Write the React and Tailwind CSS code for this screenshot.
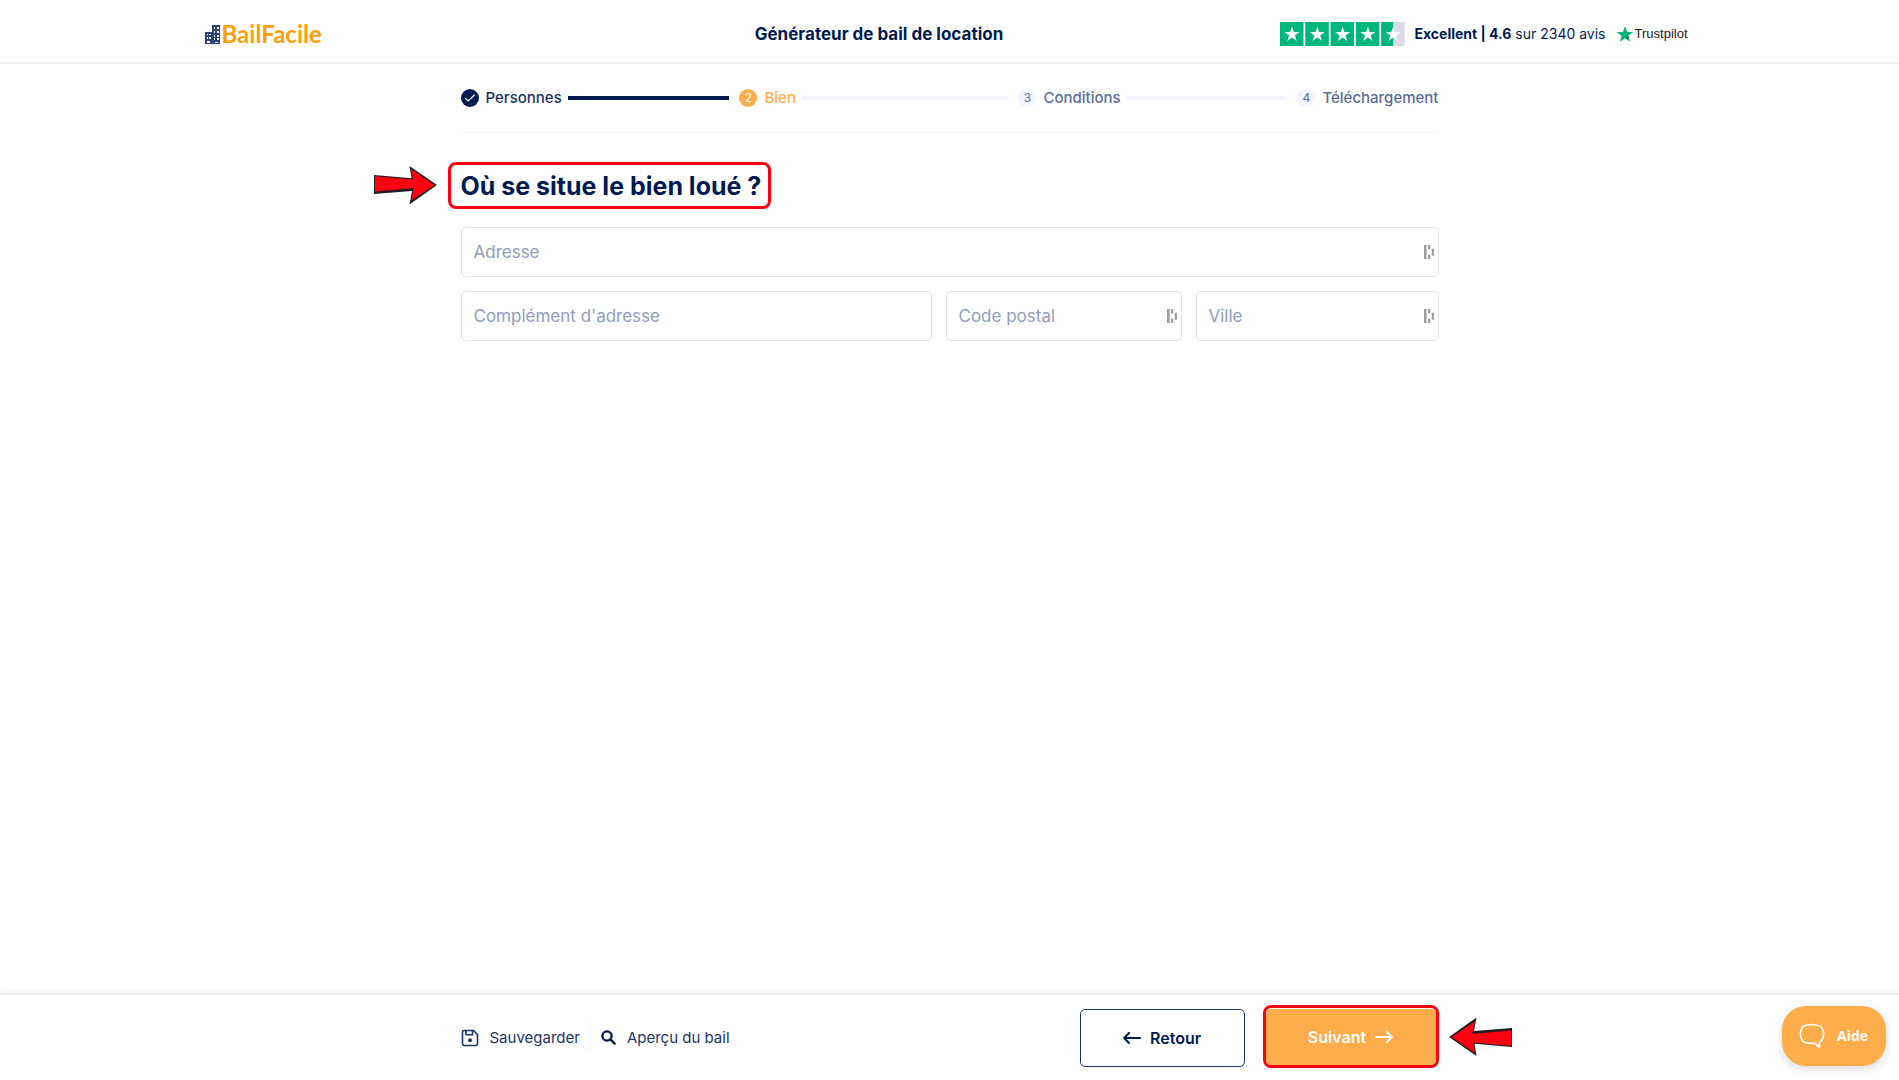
import React from "react";

const STAR = "M12 2.6l2.3 6.6h7l-5.6 4.2 2.1 6.8L12 16.1l-5.8 4.1 2.1-6.8L2.7 9.2h7z";

function Logo() {
  return (
    <a href="#" aria-label="BailFacile" className="flex w-[274px] items-center gap-px">
      <svg width="16" height="21" viewBox="0 0 16 21" shapeRendering="crispEdges" aria-hidden="true">
        <path d="M7 1h8v19H7z M0 8h7v12H0z" fill="#2b4475" />
        <path
          fill="#fff"
          d="M9 3h1v2H9z M12 3h2v2h-2z M9 7h1v2H9z M12 7h2v2h-2z M9 11h1v2H9z M12 11h2v2h-2z M9 14h1v2H9z M12 14h2v2h-2z M10 18h3v1h-3z M2 10h1v1H2z M4 10h2v1H4z M2 13h1v2H2z M4 13h2v2H4z M2 17h3v2H2z"
        />
      </svg>
      <span className="font-[Lato,sans-serif] text-2xl leading-7 font-bold text-[#ff9f0a]">BailFacile</span>
    </a>
  );
}

function Rating() {
  return (
    <div className="flex items-center">
      <svg width="125" height="24" viewBox="0 0 125 24" role="img" aria-label="4.6">
        {[0, 1, 2, 3, 4].map((i) => (
          <g key={i} transform={`translate(${i * 25.3} 0)`}>
            <rect width="23.5" height="24" fill={i === 4 ? "#dcdce6" : "#00b67a"} />
            {i === 4 && <rect width="12" height="24" fill="#00b67a" />}
            <path
              d="M12 4.5l1.8 5.5h5.7l-4.6 3.4 1.8 5.6-4.7-3.4-4.7 3.4 1.8-5.6L4.500 10h5.700z"
              fill="#fff"
            />
          </g>
        ))}
      </svg>
      <p className="ml-[10px] text-sm leading-5 whitespace-nowrap">
        <strong className="font-bold">Excellent | 4.6</strong> sur 2340 avis
      </p>
      <svg className="mr-px ml-[10px]" width="18" height="18" viewBox="2 2 20 19" aria-hidden="true">
        <path d={STAR} fill="#00b67a" />
        <path d="M16 14.300l.5 1.700-4.500 .1z" fill="#005128" />
      </svg>
      <span className="font-['Liberation_Sans',sans-serif] text-[13px] leading-5 text-[#191919]">Trustpilot</span>
    </div>
  );
}

function Badge({ state, n }) {
  if (state === "done")
    return (
      <span className="flex size-[18px] shrink-0 items-center justify-center rounded-full bg-[#001b52]">
        <svg width="12" height="12" viewBox="0 0 12 12" fill="none" stroke="#fff" strokeWidth="1.2" aria-hidden="true">
          <path d="M1.200 6.200l3 2.800 6.400-6.200" />
        </svg>
      </span>
    );
  if (state === "current")
    return (
      <span className="flex size-[18px] shrink-0 items-center justify-center rounded-full bg-[#ffac4b] text-xs text-white">{n}</span>
    );
  return (
    <span className="flex size-[18px] shrink-0 items-center justify-center rounded-full bg-[#f2f4ff] text-xs text-[#5b6b98]">{n}</span>
  );
}

const STEPS = [
  { label: "Personnes", state: "done", text: "text-[#1c3464]", line: "bg-[#001b52]" },
  { label: "Bien", state: "current", text: "text-[#ffac4b]", line: "bg-[#f2f4ff]" },
  { label: "Conditions", state: "todo", text: "text-[#5b6b98]", line: "bg-[#f2f4ff]" },
  { label: "Téléchargement", state: "todo", text: "text-[#5b6b98]" },
];

function Stepper() {
  return (
    <ol className="grid grid-cols-[1fr_1fr_1fr_auto] border-b border-[#f2f4ff] pt-6 pb-6">
      {STEPS.map((s, i) => (
        <li key={s.label} className="flex items-center">
          <Badge state={s.state} n={i + 1} />
          <span className={`ml-[7px] text-[15px] leading-5 font-medium ${s.text}`}>{s.label}</span>
          {s.line && <span className={`mr-[10px] ml-[6px] h-1 flex-1 ${s.line}`} />}
        </li>
      ))}
    </ol>
  );
}

function Field({ label, autofill }) {
  return (
    <div className="relative">
      <input
        type="text"
        aria-label={label}
        placeholder={label}
        className="block h-[50px] w-full rounded-[5px] border border-[#e4e4e6] bg-white px-3 text-[17px] text-[#001b52] placeholder:text-[#8f9dba] focus:outline-none"
      />
      {autofill && (
        <svg className="absolute top-[17px] right-1" width="11" height="16" viewBox="0 0 11 16" fill="#a09e9b" aria-hidden="true">
          <path d="M0 1h2.600v14H0z M4 1h2.300v4.500H4z M4 10.500h2.300V15H4z M7.700 4.800H10v7H7.700z" />
        </svg>
      )}
    </div>
  );
}

function PointerArrow({ className }) {
  return (
    <svg className={className} width="63" height="39" viewBox="0 0 63 39" aria-hidden="true">
      <path d="M0 9l37.500 3.200L35.500 0 63 19 35.500 38.500l2.500-13.500L0 28z" fill="#231f20" />
      <path d="M1 10.200l38 3.300L37 3 60.500 19 37 34.500l2.800-12.500L1 25.500z" fill="#ff0013" />
    </svg>
  );
}

function LongArrow({ className }) {
  return (
    <svg
      className={className}
      width="18"
      height="12"
      viewBox="0 0 18 12"
      fill="none"
      stroke="currentColor"
      strokeWidth="2"
      strokeLinecap="round"
      strokeLinejoin="round"
      aria-hidden="true"
    >
      <path d="M17 6H1.500M6 1L1.200 6 6 11" />
    </svg>
  );
}

export default function App() {
  return (
    <div className="flex min-h-screen flex-col bg-white font-[Inter,sans-serif] text-[#001b52]">
      <header className="border-b-2 border-[#f0f0f0]">
        <div className="mx-auto flex h-[62px] max-w-[1490px] items-center justify-between pt-[6px] pr-[7px]">
          <Logo />
          <p className="text-[17px] leading-6 font-bold">Générateur de bail de location</p>
          <Rating />
        </div>
      </header>

      <main className="mx-auto w-full max-w-[978px] flex-1">
        <Stepper />
        <div className="relative mt-[29px] -ml-[13px] w-fit rounded-lg border-3 border-[#ff0013] pt-[6px] pr-[7px] pb-1 pl-[10px]">
          <h1 className="text-[25px] leading-[31px] font-bold">Où se situe le bien loué ?</h1>
          <PointerArrow className="absolute top-px right-full mr-[14px]" />
        </div>
        <form className="mt-[18px] grid gap-[14px]">
          <Field label="Adresse" autofill />
          <div className="grid grid-cols-[471fr_236fr_243fr] gap-[14px]">
            <Field label="Complément d'adresse" />
            <Field label="Code postal" autofill />
            <Field label="Ville" autofill />
          </div>
        </form>
      </main>

      <footer className="relative border-t-2 border-[#ececec] shadow-[0_-1px_3px_rgba(0,0,0,0.06)]">
        <div className="mx-auto flex h-[85px] w-full max-w-[978px] items-center">
          <button type="button" className="flex items-center gap-[11px] text-[15px] leading-5 text-[#1c3464]">
            <svg width="18" height="18" viewBox="0 0 18 18" fill="none" stroke="currentColor" strokeWidth="1.6" strokeLinejoin="round" aria-hidden="true">
              <path d="M3 1.500h9.500l4 4V15a1.500 1.500 0 0 1-1.500 1.500H3A1.500 1.500 0 0 1 1.500 15V3A1.500 1.500 0 0 1 3 1.500z" />
              <path d="M5 1.500v4.300h6.500V1.500" />
              <circle cx="9" cy="11.300" r="2" fill="currentColor" stroke="none" />
            </svg>
            Sauvegarder
          </button>
          <span className="mr-[10px] ml-[10px] h-[29px] w-px bg-[#f2f4ff]" />
          <button type="button" className="flex items-center gap-[11px] text-[15px] leading-5 text-[#1c3464]">
            <svg width="15" height="15" viewBox="0 0 14 14" fill="none" stroke="#001b52" strokeWidth="2.200" strokeLinecap="round" aria-hidden="true">
              <circle cx="5.600" cy="5.600" r="4.300" />
              <path d="M9 9l3.700 3.700" />
            </svg>
            Aperçu du bail
          </button>
          <button
            type="button"
            className="ml-auto flex h-[58px] w-[165px] items-center justify-center gap-[9px] rounded-[5px] border border-[#1c3464] text-base font-semibold"
          >
            <LongArrow />
            Retour
          </button>
          <div className="relative ml-[18px]">
            <div className="-mt-[2px] rounded-lg border-3 border-[#ff0013] pt-px">
              <button
                type="button"
                className="flex h-[56px] w-[170px] items-center justify-center gap-[9px] rounded-[5px] bg-[#ffac4b] text-base font-semibold text-white"
              >
                Suivant
                <LongArrow className="rotate-180" />
              </button>
            </div>
            <PointerArrow className="absolute top-[10px] left-full ml-[10px] rotate-180" />
          </div>
        </div>
        <button
          type="button"
          className="absolute top-[11px] right-[13px] flex h-[60px] w-[104px] items-center gap-3 rounded-3xl bg-[#ffac4b] pl-[17px] font-['Open_Sans',sans-serif] text-sm font-bold text-white shadow-[0_3px_10px_rgba(0,0,0,0.15)]"
        >
          <svg width="26" height="26" viewBox="0 0 26 26" fill="none" stroke="#fff" strokeWidth="1.700" strokeLinejoin="round" aria-hidden="true">
            <path d="M13 1.500c8 0 11.500 2.500 11.500 9.500 0 4.500-1.500 7-4 8.300L20.300 24.500l-4.500-4.200c-.9.100-1.800.100-2.800.100C5 20.400 1.500 18 1.500 11S5 1.500 13 1.500z" />
          </svg>
          Aide
        </button>
      </footer>
    </div>
  );
}
